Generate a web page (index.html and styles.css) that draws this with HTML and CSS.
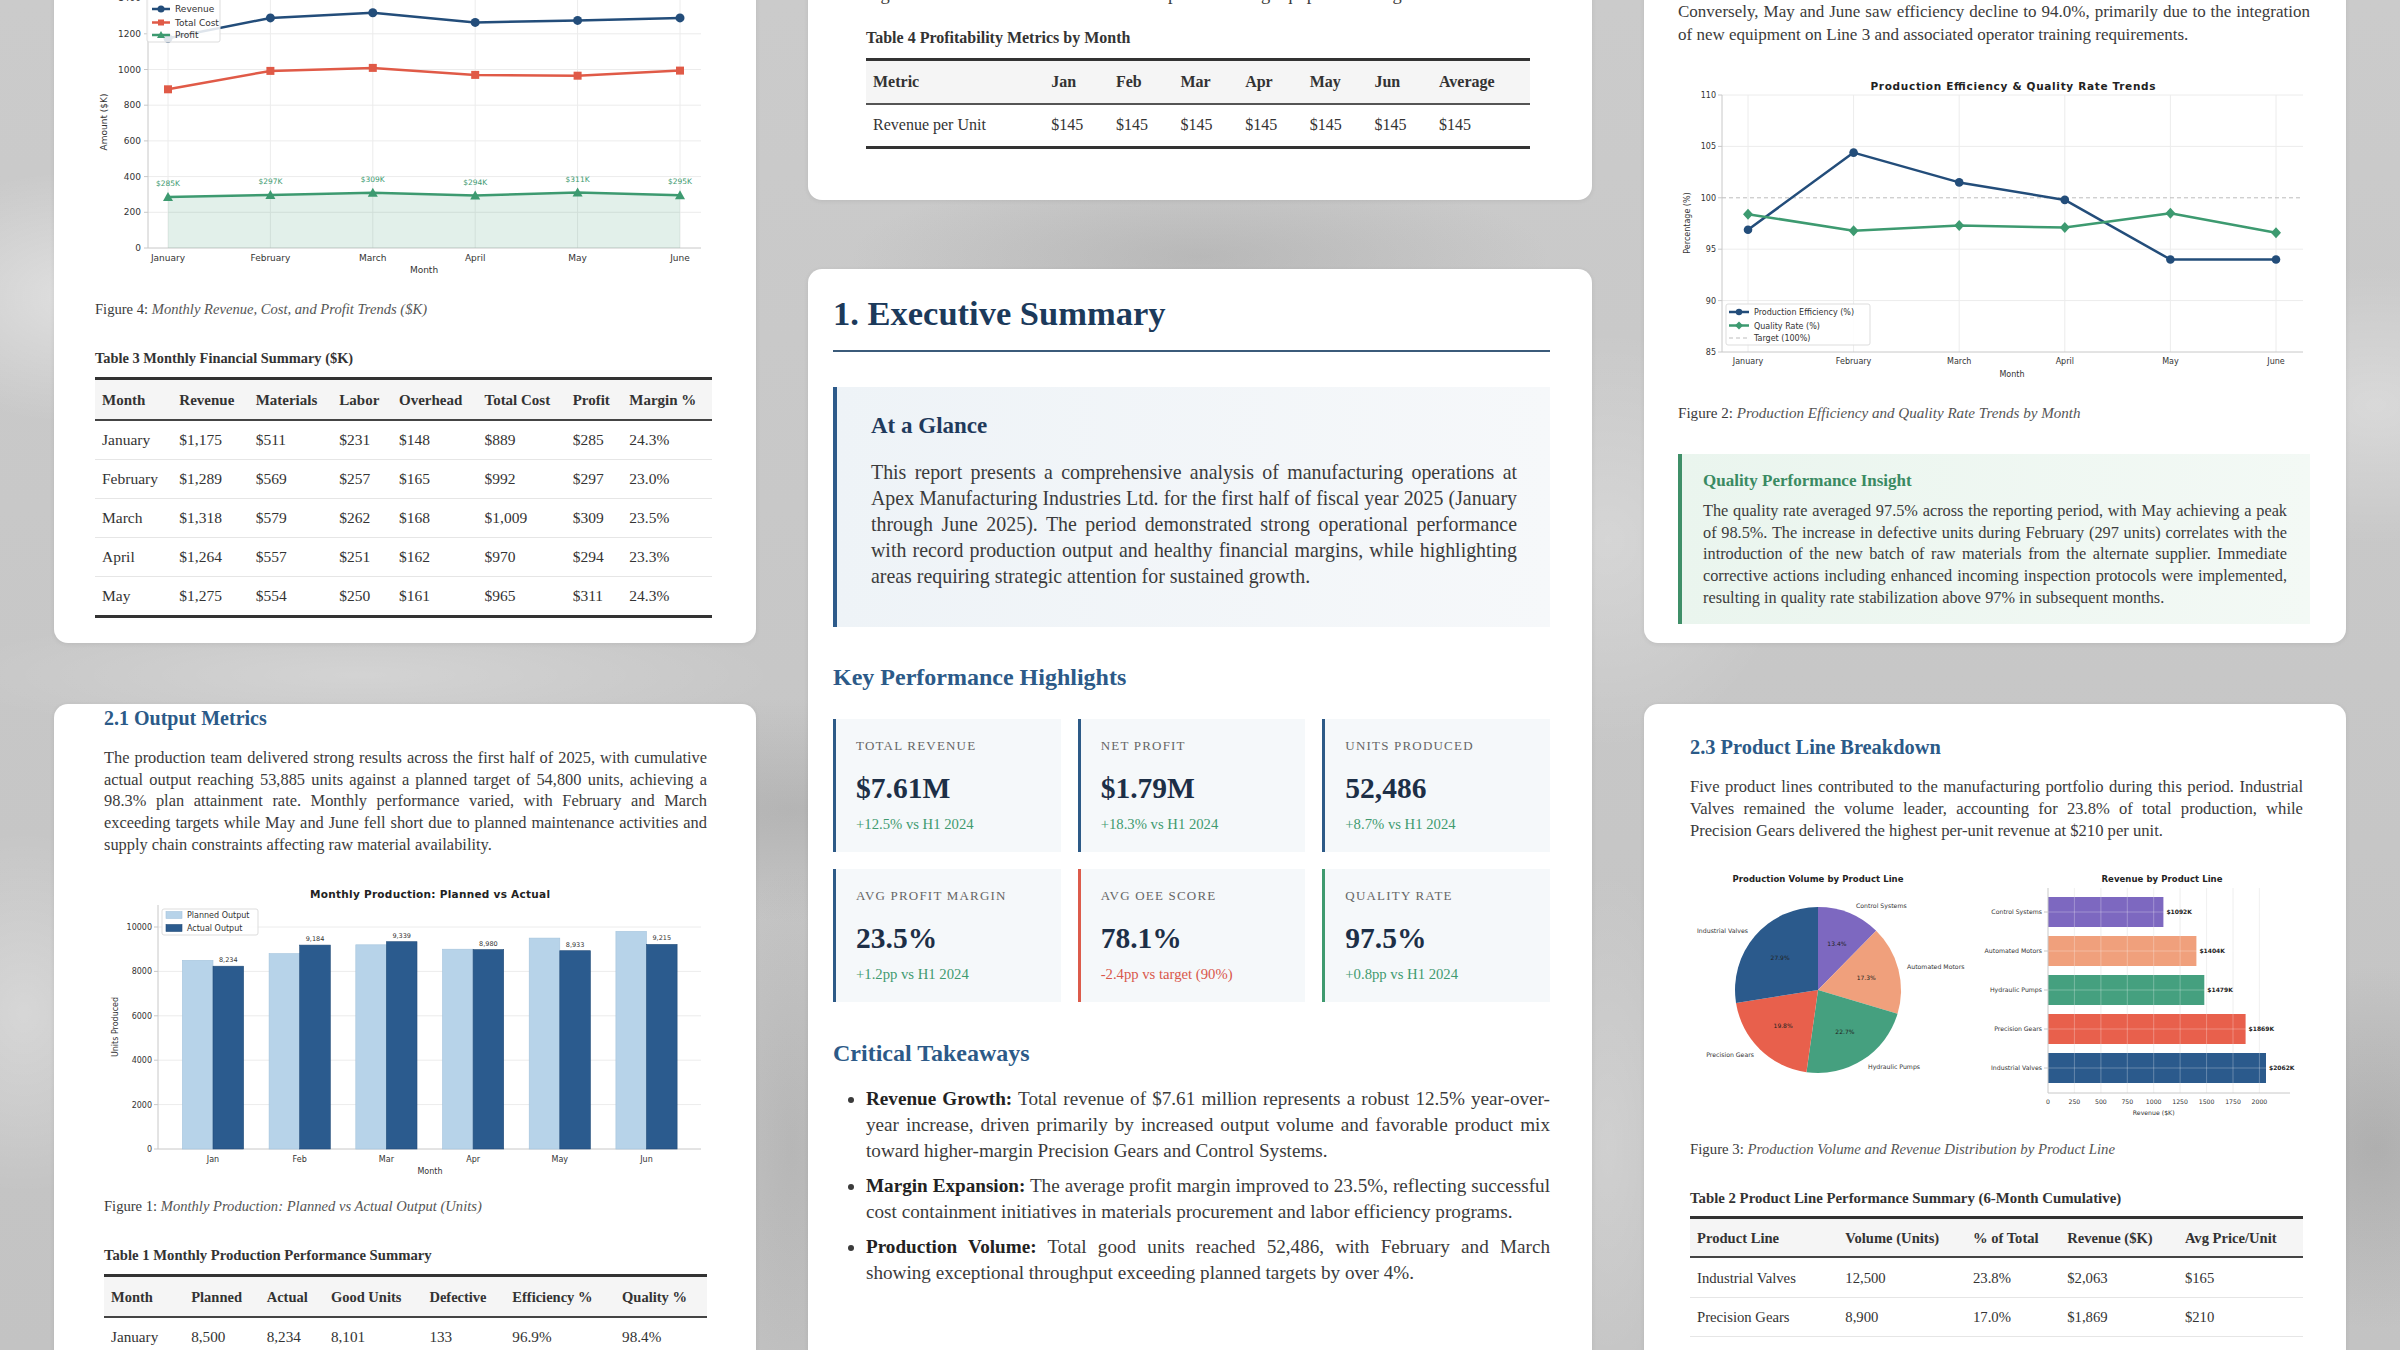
FILE: index.html
```html
<!DOCTYPE html>
<html lang="en">
<head>
<meta charset="utf-8">
<title>Apex Manufacturing Industries Ltd. – H1 2025 Operations Report</title>
<link rel="stylesheet" href="styles.css">
</head>
<body>
<main class="board">

  <!-- LEFT COLUMN -->
  <div class="col col-left">
    <section class="card card-fin">
      <svg class="chart" viewBox="0 0 617 300" width="617" height="300">
        <g class="grid">
          <line x1="53" y1="232.3" x2="606" y2="232.3"/><line x1="53" y1="196.6" x2="606" y2="196.6"/>
          <line x1="53" y1="160.9" x2="606" y2="160.9"/><line x1="53" y1="125.2" x2="606" y2="125.2"/>
          <line x1="53" y1="89.5" x2="606" y2="89.5"/><line x1="53" y1="53.8" x2="606" y2="53.8"/>
          <line x1="53" y1="18.1" x2="606" y2="18.1"/>
          <line x1="73" y1="0" x2="73" y2="268"/><line x1="175.4" y1="0" x2="175.4" y2="268"/>
          <line x1="277.8" y1="0" x2="277.8" y2="268"/><line x1="380.2" y1="0" x2="380.2" y2="268"/>
          <line x1="482.6" y1="0" x2="482.6" y2="268"/><line x1="585" y1="0" x2="585" y2="268"/>
        </g>
        <g class="axis">
          <line x1="53" y1="0" x2="53" y2="268"/><line x1="53" y1="268" x2="606" y2="268"/>
          <line x1="49" y1="268" x2="53" y2="268"/><line x1="49" y1="232.3" x2="53" y2="232.3"/>
          <line x1="49" y1="196.6" x2="53" y2="196.6"/><line x1="49" y1="160.9" x2="53" y2="160.9"/>
          <line x1="49" y1="125.2" x2="53" y2="125.2"/><line x1="49" y1="89.5" x2="53" y2="89.5"/>
          <line x1="49" y1="53.8" x2="53" y2="53.8"/><line x1="49" y1="18.1" x2="53" y2="18.1"/>
        </g>
        <g class="lbl lbl-end">
          <text x="46" y="271">0</text><text x="46" y="235.3">200</text><text x="46" y="199.6">400</text>
          <text x="46" y="163.9">600</text><text x="46" y="128.2">800</text><text x="46" y="92.5">1000</text>
          <text x="46" y="56.8">1200</text><text x="46" y="21.1">1400</text>
        </g>
        <g class="lbl lbl-mid">
          <text x="73" y="281">January</text><text x="175.4" y="281">February</text><text x="277.8" y="281">March</text>
          <text x="380.2" y="281">April</text><text x="482.6" y="281">May</text><text x="585" y="281">June</text>
          <text x="329" y="293">Month</text>
        </g>
        <text class="lbl lbl-mid" transform="translate(12 142) rotate(-90)">Amount ($K)</text>
        <polygon class="area-profit" points="73,217.1 175.4,215 277.8,212.8 380.2,215.5 482.6,212.5 585,215.3 585,268 73,268"/>
        <polyline class="ln ln-rev" points="73,58.3 175.4,37.9 277.8,32.7 380.2,42.4 482.6,40.4 585,37.9"/>
        <polyline class="ln ln-cost" points="73,109.3 175.4,90.9 277.8,87.9 380.2,94.9 482.6,95.7 585,90.6"/>
        <polyline class="ln ln-profit" points="73,217.1 175.4,215 277.8,212.8 380.2,215.5 482.6,212.5 585,215.3"/>
        <g class="mk-rev">
          <circle cx="73" cy="58.3" r="4.5"/><circle cx="175.4" cy="37.9" r="4.5"/><circle cx="277.8" cy="32.7" r="4.5"/>
          <circle cx="380.2" cy="42.4" r="4.5"/><circle cx="482.6" cy="40.4" r="4.5"/><circle cx="585" cy="37.9" r="4.5"/>
        </g>
        <g class="mk-cost">
          <rect x="69" y="105.3" width="8" height="8"/><rect x="171.4" y="86.9" width="8" height="8"/>
          <rect x="273.8" y="83.9" width="8" height="8"/><rect x="376.2" y="90.9" width="8" height="8"/>
          <rect x="478.6" y="91.7" width="8" height="8"/><rect x="581" y="86.6" width="8" height="8"/>
        </g>
        <g class="mk-profit">
          <polygon points="73,212.1 68,221.1 78,221.1"/><polygon points="175.4,210 170.4,219 180.4,219"/>
          <polygon points="277.8,207.8 272.8,216.8 282.8,216.8"/><polygon points="380.2,210.5 375.2,219.5 385.2,219.5"/>
          <polygon points="482.6,207.5 477.6,216.5 487.6,216.5"/><polygon points="585,210.3 580,219.3 590,219.3"/>
        </g>
        <g class="lbl-profit">
          <text x="73" y="206">$285K</text><text x="175.4" y="204">$297K</text><text x="277.8" y="201.8">$309K</text>
          <text x="380.2" y="204.5">$294K</text><text x="482.6" y="201.5">$311K</text><text x="585" y="204.3">$295K</text>
        </g>
        <rect class="legend-box" x="52" y="12" width="73" height="50" rx="2"/>
        <line class="ln ln-rev" x1="57" y1="29" x2="75" y2="29"/><circle class="mk-rev" cx="66" cy="29" r="3.5"/>
        <line class="ln ln-cost" x1="57" y1="42.5" x2="75" y2="42.5"/><rect class="mk-cost" x="63" y="39.5" width="6" height="6"/>
        <line class="ln ln-profit" x1="57" y1="55" x2="75" y2="55"/><polygon class="mk-profit" points="66,51 62,58 70,58"/>
        <g class="lbl lbl-start">
          <text x="80" y="32">Revenue</text><text x="80" y="45.5">Total Cost</text><text x="80" y="58">Profit</text>
        </g>
      </svg>
      <p class="figure-cap cap-fin">Figure 4: <em>Monthly Revenue, Cost, and Profit Trends ($K)</em></p>
      <p class="tbl-title tt-fin">Table 3 Monthly Financial Summary ($K)</p>
      <table class="tbl tbl-fin">
        <thead><tr><th>Month</th><th>Revenue</th><th>Materials</th><th>Labor</th><th>Overhead</th><th>Total Cost</th><th>Profit</th><th>Margin %</th></tr></thead>
        <tbody>
          <tr><td>January</td><td>$1,175</td><td>$511</td><td>$231</td><td>$148</td><td>$889</td><td>$285</td><td>24.3%</td></tr>
          <tr><td>February</td><td>$1,289</td><td>$569</td><td>$257</td><td>$165</td><td>$992</td><td>$297</td><td>23.0%</td></tr>
          <tr><td>March</td><td>$1,318</td><td>$579</td><td>$262</td><td>$168</td><td>$1,009</td><td>$309</td><td>23.5%</td></tr>
          <tr><td>April</td><td>$1,264</td><td>$557</td><td>$251</td><td>$162</td><td>$970</td><td>$294</td><td>23.3%</td></tr>
          <tr><td>May</td><td>$1,275</td><td>$554</td><td>$250</td><td>$161</td><td>$965</td><td>$311</td><td>24.3%</td></tr>
        </tbody>
      </table>
    </section>

    <section class="card card-output">
      <h3 class="sec-title">2.1 Output Metrics</h3>
      <p class="para para-out">The production team delivered strong results across the first half of 2025, with cumulative actual output reaching 53,885 units against a planned target of 54,800 units, achieving a 98.3% plan attainment rate. Monthly performance varied, with February and March exceeding targets while May and June fell short due to planned maintenance activities and supply chain constraints affecting raw material availability.</p>
      <svg class="chart chart-out" viewBox="0 0 603 300" width="603" height="300">
        <text class="ct" x="326" y="18" textLength="240">Monthly Production: Planned vs Actual</text>
        <g class="grid">
          <line x1="54" y1="224.6" x2="597" y2="224.6"/><line x1="54" y1="180.2" x2="597" y2="180.2"/>
          <line x1="54" y1="135.8" x2="597" y2="135.8"/><line x1="54" y1="91.4" x2="597" y2="91.4"/>
          <line x1="54" y1="47" x2="597" y2="47"/>
        </g>
        <g class="axis">
          <line x1="54" y1="25" x2="54" y2="269"/><line x1="54" y1="269" x2="597" y2="269"/>
          <line x1="50" y1="269" x2="54" y2="269"/><line x1="50" y1="224.6" x2="54" y2="224.6"/>
          <line x1="50" y1="180.2" x2="54" y2="180.2"/><line x1="50" y1="135.8" x2="54" y2="135.8"/>
          <line x1="50" y1="91.4" x2="54" y2="91.4"/><line x1="50" y1="47" x2="54" y2="47"/>
        </g>
        <g class="lbl lbl-end lbl-sm">
          <text x="48" y="272">0</text><text x="48" y="227.6">2000</text><text x="48" y="183.2">4000</text>
          <text x="48" y="138.8">6000</text><text x="48" y="94.4">8000</text><text x="48" y="50">10000</text>
        </g>
        <g class="bar-plan">
          <rect x="78.4" y="80.3" width="30.6" height="188.7"/><rect x="165.1" y="73.6" width="30.6" height="195.4"/>
          <rect x="251.8" y="64.8" width="30.6" height="204.2"/><rect x="338.5" y="69.2" width="30.6" height="199.8"/>
          <rect x="425.2" y="58.1" width="30.6" height="210.9"/><rect x="511.9" y="51.4" width="30.6" height="217.6"/>
        </g>
        <g class="bar-act">
          <rect x="109" y="86.2" width="30.6" height="182.8"/><rect x="195.7" y="65.1" width="30.6" height="203.9"/>
          <rect x="282.4" y="61.7" width="30.6" height="207.3"/><rect x="369.1" y="69.6" width="30.6" height="199.4"/>
          <rect x="455.8" y="70.7" width="30.6" height="198.3"/><rect x="542.5" y="64.4" width="30.6" height="204.6"/>
        </g>
        <g class="lbl lbl-mid lbl-xs">
          <text x="124.3" y="82.2">8,234</text><text x="211" y="61.1">9,184</text><text x="297.7" y="57.7">9,339</text>
          <text x="384.4" y="65.6">8,980</text><text x="471.1" y="66.7">8,933</text><text x="557.8" y="60.4">9,215</text>
        </g>
        <g class="lbl lbl-mid lbl-sm">
          <text x="109" y="282">Jan</text><text x="195.7" y="282">Feb</text><text x="282.4" y="282">Mar</text>
          <text x="369.1" y="282">Apr</text><text x="455.8" y="282">May</text><text x="542.5" y="282">Jun</text>
          <text x="326" y="294">Month</text>
        </g>
        <text class="lbl lbl-mid lbl-sm" transform="translate(14 147) rotate(-90)">Units Produced</text>
        <rect class="legend-box" x="58" y="29" width="96" height="26" rx="2"/>
        <rect class="bar-plan" x="62" y="31.5" width="16" height="7"/>
        <rect class="bar-act" x="62" y="44.5" width="16" height="7"/>
        <g class="lbl lbl-start lbl-sm">
          <text x="83" y="38">Planned Output</text><text x="83" y="51">Actual Output</text>
        </g>
      </svg>
      <p class="figure-cap cap-out">Figure 1: <em>Monthly Production: Planned vs Actual Output (Units)</em></p>
      <p class="tbl-title tt-out">Table 1 Monthly Production Performance Summary</p>
      <table class="tbl tbl-out">
        <thead><tr><th>Month</th><th>Planned</th><th>Actual</th><th>Good Units</th><th>Defective</th><th>Efficiency %</th><th>Quality %</th></tr></thead>
        <tbody>
          <tr><td>January</td><td>8,500</td><td>8,234</td><td>8,101</td><td>133</td><td>96.9%</td><td>98.4%</td></tr>
          <tr><td>February</td><td>8,800</td><td>9,184</td><td>8,887</td><td>297</td><td>104.4%</td><td>96.8%</td></tr>
          <tr><td>March</td><td>9,200</td><td>9,339</td><td>9,087</td><td>252</td><td>101.5%</td><td>97.3%</td></tr>
        </tbody>
      </table>
    </section>
  </div>

  <!-- MIDDLE COLUMN -->
  <div class="col col-mid">
    <section class="card card-profit">
      <p class="para para-top">higher direct labor costs and overtime expenses during equipment changeover.</p>
      <p class="tbl-title tt-profit">Table 4 Profitability Metrics by Month</p>
      <table class="tbl tbl-profit">
        <thead><tr><th>Metric</th><th>Jan</th><th>Feb</th><th>Mar</th><th>Apr</th><th>May</th><th>Jun</th><th>Average</th></tr></thead>
        <tbody>
          <tr><td>Revenue per Unit</td><td>$145</td><td>$145</td><td>$145</td><td>$145</td><td>$145</td><td>$145</td><td>$145</td></tr>
        </tbody>
      </table>
    </section>

    <section class="card card-exec">
      <h2 class="exec-title">1. Executive Summary</h2>
      <div class="glance">
        <h3 class="glance-title">At a Glance</h3>
        <p>This report presents a comprehensive analysis of manufacturing operations at Apex Manufacturing Industries Ltd. for the first half of fiscal year 2025 (January through June 2025). The period demonstrated strong operational performance with record production output and healthy financial margins, while highlighting areas requiring strategic attention for sustained growth.</p>
      </div>

      <h3 class="sub-title">Key Performance Highlights</h3>
      <div class="kpis">
        <div class="kpi"><div class="kpi-label">Total Revenue</div><div class="kpi-value">$7.61M</div><div class="kpi-delta">+12.5% vs H1 2024</div></div>
        <div class="kpi"><div class="kpi-label">Net Profit</div><div class="kpi-value">$1.79M</div><div class="kpi-delta">+18.3% vs H1 2024</div></div>
        <div class="kpi"><div class="kpi-label">Units Produced</div><div class="kpi-value">52,486</div><div class="kpi-delta">+8.7% vs H1 2024</div></div>
        <div class="kpi"><div class="kpi-label">Avg Profit Margin</div><div class="kpi-value">23.5%</div><div class="kpi-delta">+1.2pp vs H1 2024</div></div>
        <div class="kpi kpi-warn"><div class="kpi-label">Avg OEE Score</div><div class="kpi-value">78.1%</div><div class="kpi-delta">-2.4pp vs target (90%)</div></div>
        <div class="kpi kpi-good"><div class="kpi-label">Quality Rate</div><div class="kpi-value">97.5%</div><div class="kpi-delta">+0.8pp vs H1 2024</div></div>
      </div>

      <h3 class="sub-title sub-title-take">Critical Takeaways</h3>
      <ul class="takeaways">
        <li><strong>Revenue Growth:</strong> Total revenue of $7.61 million represents a robust 12.5% year-over-year increase, driven primarily by increased output volume and favorable product mix toward higher-margin Precision Gears and Control Systems.</li>
        <li><strong>Margin Expansion:</strong> The average profit margin improved to 23.5%, reflecting successful cost containment initiatives in materials procurement and labor efficiency programs.</li>
        <li><strong>Production Volume:</strong> Total good units reached 52,486, with February and March showing exceptional throughput exceeding planned targets by over 4%.</li>
      </ul>
    </section>
  </div>

  <!-- RIGHT COLUMN -->
  <div class="col col-right">
    <section class="card card-quality">
      <p class="para para-conv">Conversely, May and June saw efficiency decline to 94.0%, primarily due to the integration of new equipment on Line 3 and associated operator training requirements.</p>
      <svg class="chart chart-eff" viewBox="0 0 632 330" width="632" height="330">
        <text class="ct" x="335" y="32" textLength="285">Production Efficiency &amp; Quality Rate Trends</text>
        <g class="grid">
          <line x1="44" y1="37" x2="625" y2="37"/><line x1="44" y1="88.4" x2="625" y2="88.4"/>
          <line x1="44" y1="191.2" x2="625" y2="191.2"/><line x1="44" y1="242.6" x2="625" y2="242.6"/>
          <line x1="70" y1="37" x2="70" y2="294"/><line x1="175.6" y1="37" x2="175.6" y2="294"/>
          <line x1="281.2" y1="37" x2="281.2" y2="294"/><line x1="386.8" y1="37" x2="386.8" y2="294"/>
          <line x1="492.4" y1="37" x2="492.4" y2="294"/><line x1="598" y1="37" x2="598" y2="294"/>
        </g>
        <g class="axis">
          <line x1="44" y1="37" x2="44" y2="294"/><line x1="44" y1="294" x2="625" y2="294"/>
          <line x1="40" y1="37" x2="44" y2="37"/><line x1="40" y1="88.4" x2="44" y2="88.4"/>
          <line x1="40" y1="139.8" x2="44" y2="139.8"/><line x1="40" y1="191.2" x2="44" y2="191.2"/>
          <line x1="40" y1="242.6" x2="44" y2="242.6"/><line x1="40" y1="294" x2="44" y2="294"/>
        </g>
        <line class="target" x1="44" y1="139.8" x2="625" y2="139.8"/>
        <g class="lbl lbl-end lbl-sm">
          <text x="38" y="40">110</text><text x="38" y="91.4">105</text><text x="38" y="142.8">100</text>
          <text x="38" y="194.2">95</text><text x="38" y="245.6">90</text><text x="38" y="297">85</text>
        </g>
        <g class="lbl lbl-mid lbl-sm">
          <text x="70" y="306">January</text><text x="175.6" y="306">February</text><text x="281.2" y="306">March</text>
          <text x="386.8" y="306">April</text><text x="492.4" y="306">May</text><text x="598" y="306">June</text>
          <text x="334" y="319">Month</text>
        </g>
        <text class="lbl lbl-mid lbl-sm" transform="translate(12 165) rotate(-90)">Percentage (%)</text>
        <polyline class="ln ln-rev" points="70,171.7 175.6,94.6 281.2,124.4 386.8,141.9 492.4,201.5 598,201.5"/>
        <polyline class="ln ln-profit" points="70,156.2 175.6,172.7 281.2,167.6 386.8,169.6 492.4,155.2 598,174.8"/>
        <g class="mk-rev">
          <circle cx="70" cy="171.7" r="4.3"/><circle cx="175.6" cy="94.6" r="4.3"/><circle cx="281.2" cy="124.4" r="4.3"/>
          <circle cx="386.8" cy="141.9" r="4.3"/><circle cx="492.4" cy="201.5" r="4.3"/><circle cx="598" cy="201.5" r="4.3"/>
        </g>
        <g class="mk-profit">
          <polygon points="70,150.7 75,156.2 70,161.7 65,156.2"/><polygon points="175.6,167.2 180.6,172.7 175.6,178.2 170.6,172.7"/>
          <polygon points="281.2,162.1 286.2,167.6 281.2,173.1 276.2,167.6"/><polygon points="386.8,164.1 391.8,169.6 386.8,175.1 381.8,169.6"/>
          <polygon points="492.4,149.7 497.4,155.2 492.4,160.7 487.4,155.2"/><polygon points="598,169.3 603,174.8 598,180.3 593,174.8"/>
        </g>
        <rect class="legend-box" x="48" y="246" width="144" height="41" rx="2"/>
        <line class="ln ln-rev" x1="51" y1="254" x2="71" y2="254"/><circle class="mk-rev" cx="61" cy="254" r="3.2"/>
        <line class="ln ln-profit" x1="51" y1="267.5" x2="71" y2="267.5"/><polygon class="mk-profit" points="61,263.5 65,267.5 61,271.5 57,267.5"/>
        <line class="target" x1="51" y1="280" x2="71" y2="280"/>
        <g class="lbl lbl-start lbl-sm">
          <text x="76" y="257">Production Efficiency (%)</text><text x="76" y="270.5">Quality Rate (%)</text><text x="76" y="283">Target (100%)</text>
        </g>
      </svg>
      <p class="figure-cap cap-eff">Figure 2: <em>Production Efficiency and Quality Rate Trends by Month</em></p>
      <div class="insight">
        <h4 class="insight-title">Quality Performance Insight</h4>
        <p>The quality rate averaged 97.5% across the reporting period, with May achieving a peak of 98.5%. The increase in defective units during February (297 units) correlates with the introduction of the new batch of raw materials from the alternate supplier. Immediate corrective actions including enhanced incoming inspection protocols were implemented, resulting in quality rate stabilization above 97% in subsequent months.</p>
      </div>
    </section>

    <section class="card card-product">
      <h3 class="sec-title sec-title-prod">2.3 Product Line Breakdown</h3>
      <p class="para para-prod">Five product lines contributed to the manufacturing portfolio during this period. Industrial Valves remained the volume leader, accounting for 23.8% of total production, while Precision Gears delivered the highest per-unit revenue at $210 per unit.</p>
      <svg class="chart chart-prod" viewBox="0 0 613 255" width="613" height="255">
        <text class="ct" x="128" y="17" textLength="171">Production Volume by Product Line</text>
        <path class="s-cs" d="M128,125 L128,42 A83,83 0 0,1 186.17,65.8 Z"/>
        <path class="s-am" d="M128,125 L186.17,65.8 A83,83 0 0,1 207.54,148.71 Z"/>
        <path class="s-hp" d="M128,125 L207.54,148.71 A83,83 0 0,1 116.45,207.19 Z"/>
        <path class="s-pg" d="M128,125 L116.45,207.19 A83,83 0 0,1 46.02,137.98 Z"/>
        <path class="s-iv" d="M128,125 L46.02,137.98 A83,83 0 0,1 128,42 Z"/>
        <g class="lbl lbl-mid lbl-pie">
          <text x="146.9" y="81">13.4%</text><text x="176.2" y="114.6">17.3%</text><text x="154.9" y="168.9">22.7%</text>
          <text x="93.1" y="162.5">19.8%</text><text x="90.1" y="94.7">27.9%</text>
        </g>
        <g class="lbl lbl-start lbl-tiny">
          <text x="166" y="42.5">Control Systems</text><text x="217" y="104">Automated Motors</text><text x="178" y="204">Hydraulic Pumps</text>
        </g>
        <g class="lbl lbl-end lbl-tiny">
          <text x="64" y="192">Precision Gears</text><text x="58" y="68">Industrial Valves</text>
        </g>

        <text class="ct" x="472" y="17" textLength="121">Revenue by Product Line</text>
        <g class="grid">
          <line x1="384.4" y1="23" x2="384.4" y2="228"/><line x1="410.9" y1="23" x2="410.9" y2="228"/>
          <line x1="437.3" y1="23" x2="437.3" y2="228"/><line x1="463.7" y1="23" x2="463.7" y2="228"/>
          <line x1="490.1" y1="23" x2="490.1" y2="228"/><line x1="516.6" y1="23" x2="516.6" y2="228"/>
          <line x1="543" y1="23" x2="543" y2="228"/><line x1="569.4" y1="23" x2="569.4" y2="228"/>
        </g>
        <rect class="s-cs" x="358" y="32" width="115.4" height="30"/>
        <rect class="s-am" x="358" y="71" width="148.4" height="30"/>
        <rect class="s-hp" x="358" y="110" width="156.3" height="30"/>
        <rect class="s-pg" x="358" y="149" width="197.6" height="30"/>
        <rect class="s-iv" x="358" y="188" width="218" height="30"/>
        <g class="bar-grid">
          <line x1="384.4" y1="23" x2="384.4" y2="228"/><line x1="410.9" y1="23" x2="410.9" y2="228"/>
          <line x1="437.3" y1="23" x2="437.3" y2="228"/><line x1="463.7" y1="23" x2="463.7" y2="228"/>
          <line x1="490.1" y1="23" x2="490.1" y2="228"/><line x1="516.6" y1="23" x2="516.6" y2="228"/>
          <line x1="543" y1="23" x2="543" y2="228"/><line x1="569.4" y1="23" x2="569.4" y2="228"/>
          <line x1="358" y1="47" x2="600" y2="47"/><line x1="358" y1="86" x2="600" y2="86"/>
          <line x1="358" y1="125" x2="600" y2="125"/><line x1="358" y1="164" x2="600" y2="164"/>
          <line x1="358" y1="203" x2="600" y2="203"/>
        </g>
        <g class="axis">
          <line x1="358" y1="23" x2="358" y2="228"/><line x1="358" y1="228" x2="600" y2="228"/>
          <line x1="354" y1="47" x2="358" y2="47"/><line x1="354" y1="86" x2="358" y2="86"/>
          <line x1="354" y1="125" x2="358" y2="125"/><line x1="354" y1="164" x2="358" y2="164"/>
          <line x1="354" y1="203" x2="358" y2="203"/>
        </g>
        <g class="lbl lbl-end lbl-tiny">
          <text x="352" y="49">Control Systems</text><text x="352" y="88">Automated Motors</text>
          <text x="352" y="127">Hydraulic Pumps</text><text x="352" y="166">Precision Gears</text>
          <text x="352" y="205">Industrial Valves</text>
        </g>
        <g class="lbl lbl-start lbl-val">
          <text x="476.4" y="49">$1092K</text><text x="509.4" y="88">$1404K</text><text x="517.3" y="127">$1479K</text>
          <text x="558.6" y="166">$1869K</text><text x="579" y="205">$2062K</text>
        </g>
        <g class="lbl lbl-mid lbl-tiny">
          <text x="358" y="239">0</text><text x="384.4" y="239">250</text><text x="410.9" y="239">500</text>
          <text x="437.3" y="239">750</text><text x="463.7" y="239">1000</text><text x="490.1" y="239">1250</text>
          <text x="516.6" y="239">1500</text><text x="543" y="239">1750</text><text x="569.4" y="239">2000</text>
          <text x="463.7" y="250">Revenue ($K)</text>
        </g>
      </svg>
      <p class="figure-cap cap-prod">Figure 3: <em>Production Volume and Revenue Distribution by Product Line</em></p>
      <p class="tbl-title tt-prod">Table 2 Product Line Performance Summary (6-Month Cumulative)</p>
      <table class="tbl tbl-prod">
        <thead><tr><th>Product Line</th><th>Volume (Units)</th><th>% of Total</th><th>Revenue ($K)</th><th>Avg Price/Unit</th></tr></thead>
        <tbody>
          <tr><td>Industrial Valves</td><td>12,500</td><td>23.8%</td><td>$2,063</td><td>$165</td></tr>
          <tr><td>Precision Gears</td><td>8,900</td><td>17.0%</td><td>$1,869</td><td>$210</td></tr>
          <tr><td>Hydraulic Pumps</td><td>11,900</td><td>22.7%</td><td>$1,479</td><td>$124</td></tr>
          <tr><td>Automated Motors</td><td>9,100</td><td>17.3%</td><td>$1,404</td><td>$154</td></tr>
        </tbody>
      </table>
    </section>
  </div>

</main>
</body>
</html>
```

FILE: styles.css
```css
* { box-sizing: border-box; }

html, body { margin: 0; padding: 0; }

body {
  width: 2400px;
  height: 1350px;
  overflow: hidden;
  font-family: "Liberation Serif", "Times New Roman", serif;
  color: #3b3b3b;
  background-color: #c6c6c6;
  background-image:
    radial-gradient(ellipse 260px 180px at 3% 22%, rgba(255,255,255,0.4), rgba(255,255,255,0) 70%),
    radial-gradient(ellipse 200px 260px at 1% 75%, rgba(255,255,255,0.3), rgba(255,255,255,0) 70%),
    radial-gradient(ellipse 420px 160px at 33% 60%, rgba(110,110,110,0.2), rgba(110,110,110,0) 70%),
    radial-gradient(ellipse 500px 120px at 50% 19%, rgba(140,140,140,0.28), rgba(140,140,140,0) 70%),
    radial-gradient(ellipse 260px 300px at 67% 40%, rgba(255,255,255,0.25), rgba(255,255,255,0) 70%),
    radial-gradient(ellipse 300px 200px at 99% 30%, rgba(255,255,255,0.3), rgba(255,255,255,0) 70%),
    radial-gradient(ellipse 240px 260px at 99% 85%, rgba(100,100,100,0.22), rgba(100,100,100,0) 70%),
    radial-gradient(ellipse 600px 90px at 15% 50%, rgba(255,255,255,0.22), rgba(255,255,255,0) 70%),
    radial-gradient(ellipse 120px 400px at 33% 85%, rgba(120,120,120,0.18), rgba(120,120,120,0) 70%),
    radial-gradient(ellipse 120px 400px at 67% 85%, rgba(255,255,255,0.2), rgba(255,255,255,0) 70%),
    linear-gradient(180deg, #cbcbcb, #c3c3c3);
}

.board {
  display: grid;
  grid-template-columns: 702px 784px 702px;
  column-gap: 52px;
  padding-left: 54px;
  align-items: start;
}

.col { display: flex; flex-direction: column; }
.col-left { margin-top: -30px; gap: 61px; }
.col-mid { margin-top: -40px; gap: 69px; }
.col-right { margin-top: -30px; gap: 61px; }

.card {
  background: #ffffff;
  border-radius: 14px;
  box-shadow: 0 1px 5px rgba(0, 0, 0, 0.08);
}

.card-fin { padding: 10px 44px 25px 41px; }
.card-output { padding: 2px 49px 0 50px; min-height: 720px; }
.card-profit { padding: 21px 62px 51px 58px; }
.card-exec { padding: 22.5px 42px 60px 25px; min-height: 1120px; }
.card-quality { padding: 30px 36px 19px 34px; }
.card-product { padding: 30px 43px 0 46px; min-height: 720px; }

/* text */
.para { margin: 0; text-align: justify; }
.para-out { font-size: 16.4px; line-height: 21.7px; margin-top: 17px; }
.para-prod { font-size: 16.6px; line-height: 22px; margin-top: 16px; }
.para-conv { font-size: 17px; line-height: 23px; }
.para-top { font-size: 18.5px; line-height: 26px; white-space: nowrap; }

.sec-title {
  margin: 0;
  font-size: 20px;
  line-height: 24px;
  font-weight: bold;
  color: #2b5a88;
}
.sec-title-prod { font-size: 20.4px; line-height: 26px; }

.figure-cap {
  margin: 0;
  font-size: 14.6px;
  line-height: 20px;
  color: #3a3a3a;
}
.figure-cap em { color: #555; }
.cap-fin { margin-top: 19px; }
.cap-out { margin-top: 16px; }
.cap-eff { margin-top: 15px; font-size: 15.1px; }
.cap-prod { margin-top: 19px; font-size: 14.8px; }

.tbl-title {
  margin: 0;
  font-weight: bold;
  color: #333;
  line-height: 20px;
}
.tt-fin { margin-top: 29px; font-size: 14.4px; }
.tt-out { margin-top: 29px; font-size: 14.7px; }
.tt-prod { margin-top: 29px; font-size: 14.8px; }
.tt-profit { margin-top: 20px; font-size: 16px; line-height: 22px; }

/* charts */
.chart { display: block; }
.chart-out { margin-top: 24.5px; }
.chart-eff { margin-top: 12px; }
.chart-prod { margin-top: 23px; }

.chart .grid line { stroke: #ececec; stroke-width: 1; }
.chart .axis line { stroke: #c8c8c8; stroke-width: 1; }
.chart .lbl { font-family: "DejaVu Sans", sans-serif; font-size: 9px; fill: #333; }
.chart .lbl-sm { font-size: 8px; }
.chart .lbl-xs { font-size: 6.5px; }
.chart .lbl-tiny { font-size: 6.2px; }
.chart .lbl-pie { font-size: 6px; fill: #222; }
.chart .lbl-val { font-size: 6px; font-weight: bold; fill: #222; }
.chart .lbl-end { text-anchor: end; }
.chart .lbl-mid { text-anchor: middle; }
.chart .lbl-start { text-anchor: start; }
.chart .ct {
  font-family: "DejaVu Sans", sans-serif;
  font-size: 10.5px;
  font-weight: bold;
  fill: #222;
  text-anchor: middle;
}
.chart-prod .ct { font-size: 8.5px; }

.ln { fill: none; stroke-width: 2.5; stroke-linejoin: round; }
.ln-rev { stroke: #234d7a; }
.ln-cost { stroke: #e05a47; }
.ln-profit { stroke: #3d9a70; }
.mk-rev, .mk-rev circle { fill: #234d7a; }
.mk-cost, .mk-cost rect { fill: #e05a47; }
.mk-profit, .mk-profit polygon { fill: #3d9a70; }
.area-profit { fill: #3d9a70; fill-opacity: 0.15; }
.lbl-profit text {
  font-family: "DejaVu Sans", sans-serif;
  font-size: 7.5px;
  fill: #3d9a70;
  text-anchor: middle;
}
.legend-box { fill: #ffffff; fill-opacity: 0.85; stroke: #dddddd; stroke-width: 1; }
.target { stroke: #bdbdbd; stroke-width: 1; stroke-dasharray: 4 3; }

.bar-plan, .bar-plan rect { fill: #b7d3e9; stroke: #a3c3dc; stroke-width: 0.6; }
.bar-act, .bar-act rect { fill: #2b5b8e; stroke: #224c79; stroke-width: 0.6; }

.s-cs { fill: #7d68c0; }
.s-am { fill: #f0a07c; }
.s-hp { fill: #45a07f; }
.s-pg { fill: #e8604c; }
.s-iv { fill: #2b5a8c; }
.bar-grid line { stroke: #ffffff; stroke-opacity: 0.28; stroke-width: 1; }

/* tables */
.tbl {
  width: 100%;
  border-collapse: separate;
  border-spacing: 0;
  color: #333;
}
.tbl th {
  text-align: left;
  font-weight: bold;
  background: #f5f5f5;
  border-top: 3px solid #333;
  border-bottom: 2px solid #444;
  white-space: nowrap;
}
.tbl td {
  border-bottom: 1px solid #e6e6e6;
  white-space: nowrap;
}
.tbl tbody tr:last-child td { border-bottom: 3px solid #333; }

.tbl-fin { margin-top: 9px; }
.tbl-fin th { font-size: 15px; line-height: 20px; padding: 9.5px 7px; }
.tbl-fin td { font-size: 15.5px; line-height: 20px; padding: 9px 7px; }

.tbl-out { margin-top: 9px; }
.tbl-out th { font-size: 14.5px; line-height: 20px; padding: 9.5px 7px; }
.tbl-out td { font-size: 15.2px; line-height: 20px; padding: 9px 7px; }

.tbl-prod { margin-top: 8px; }
.tbl-prod th { font-size: 14.6px; line-height: 20px; padding: 8.5px 7px; }
.tbl-prod td { font-size: 14.7px; line-height: 20px; padding: 9.25px 7px; }

.tbl-profit { margin-top: 8.5px; }
.tbl-profit th { font-size: 16px; line-height: 22px; padding: 10px 7px; border-bottom: 2px solid #555; }
.tbl-profit td { font-size: 16px; line-height: 22px; padding: 9.5px 7px; }

/* executive summary */
.exec-title {
  margin: 0;
  font-size: 34.5px;
  line-height: 44px;
  font-weight: bold;
  color: #1c3a5b;
  padding-bottom: 15px;
  border-bottom: 2px solid #3b5b7a;
}

.glance {
  margin-top: 34.5px;
  padding: 24px 33px 38px 34px;
  border-left: 4px solid #2d5a8a;
  background: linear-gradient(90deg, #eef3f7, #f6f8fa);
}
.glance-title {
  margin: 0;
  font-size: 23px;
  line-height: 30px;
  font-weight: bold;
  color: #1f3a5c;
}
.glance p {
  margin: 18px 0 0;
  font-size: 19.9px;
  line-height: 26px;
  text-align: justify;
  color: #3b3b3b;
}

.sub-title {
  margin: 35px 0 0;
  font-size: 24px;
  line-height: 30px;
  font-weight: bold;
  color: #2c5a88;
}
.sub-title-take { margin-top: 36px; }

.kpis {
  display: grid;
  grid-template-columns: repeat(3, 1fr);
  gap: 17px;
  margin-top: 27px;
}
.kpi {
  height: 133px;
  background: #f5f8fa;
  border-left: 3.5px solid #2d5a87;
  padding: 18.5px 12px 0 20px;
}
.kpi-label {
  font-size: 13px;
  line-height: 18px;
  letter-spacing: 1.2px;
  text-transform: uppercase;
  color: #666;
}
.kpi-value {
  margin-top: 15px;
  font-size: 29.5px;
  line-height: 36px;
  font-weight: bold;
  color: #1d2f47;
}
.kpi-delta {
  margin-top: 8px;
  font-size: 14.7px;
  line-height: 20px;
  color: #3f9a6f;
}
.kpi-warn { border-left-color: #dc5b4b; }
.kpi-warn .kpi-delta { color: #d9574a; }
.kpi-good { border-left-color: #3f9a6f; }

.takeaways {
  margin: 18px 0 0;
  padding-left: 33px;
  font-size: 19.17px;
  line-height: 26.3px;
  text-align: justify;
  color: #3b3b3b;
}
.takeaways li { margin-bottom: 8.5px; }
.takeaways strong { color: #222; }

/* insight */
.insight {
  margin-top: 31px;
  padding: 15px 23px 16px 21px;
  border-left: 4px solid #3f8f68;
  background: linear-gradient(90deg, #eaf5ee, #f3f9f5);
}
.insight-title {
  margin: 0;
  font-size: 17px;
  line-height: 24px;
  font-weight: bold;
  color: #3a8a62;
}
.insight p {
  margin: 7px 0 0;
  font-size: 16.3px;
  line-height: 21.65px;
  text-align: justify;
  color: #3b3b3b;
}
```
